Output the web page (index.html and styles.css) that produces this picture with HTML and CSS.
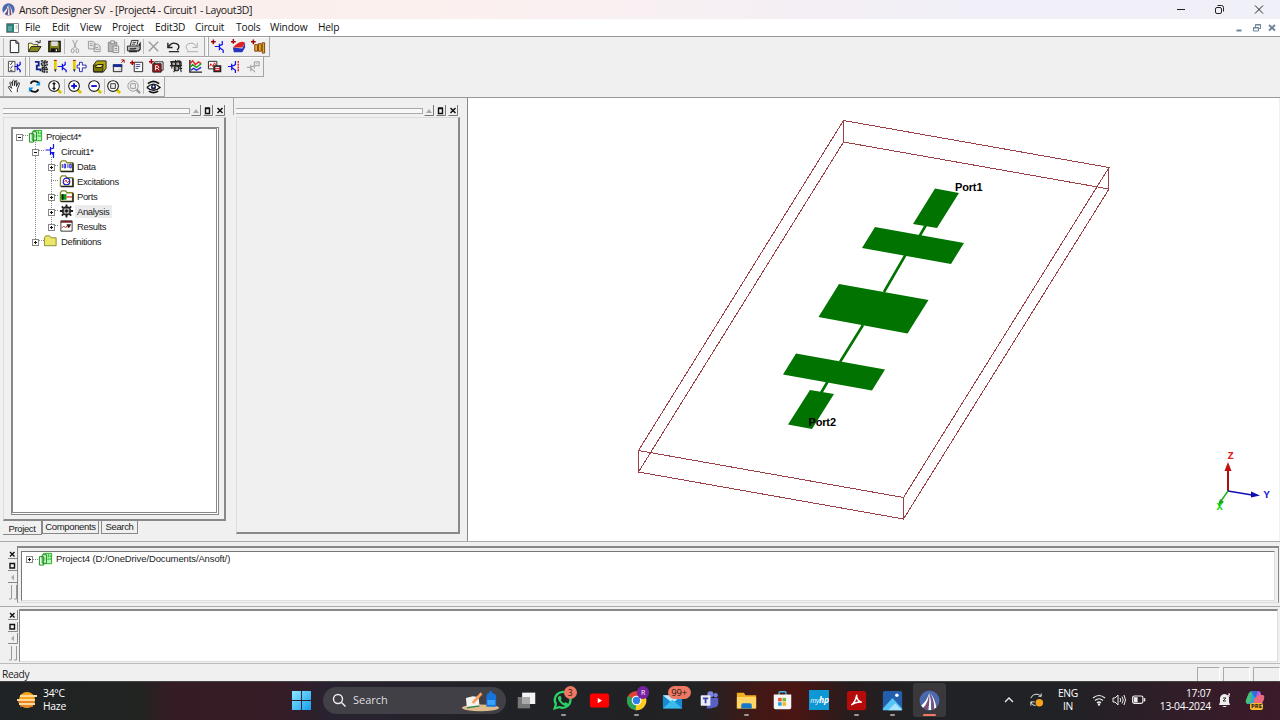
FILE: index.html
```html
<!DOCTYPE html>
<html lang="en">
<head>
<meta charset="utf-8">
<title>Ansoft Designer SV</title>
<link rel="stylesheet" href="styles.css">
</head>
<body>
<svg class="defs" width="0" height="0">
  <defs>
    <symbol id="ansoft" viewBox="0 0 20 20"><circle cx="10" cy="10" r="9.500" fill="#4a68ab"/><path d="M10 2Q8 10 2 15l2 2q5-5 6-15z" fill="#fff"/><path d="M9.500 5Q9 13 5.500 17.500l2 1Q10 13 9.500 5" fill="#b23c45"/><path d="M10 3q0 9-1 16h2.500Q12 10 10 3M11 3q4 8 3.500 15l2-1.500Q15 8 11 3" fill="#fff"/><path d="M10.500 3q3 8 2 16l1.500-1Q14 9 10.500 3" fill="#b23c45"/></symbol>
    <symbol id="project" viewBox="0 0 16 14"><path d="M6 1h8.500v11H6z" fill="#b9f7b9" stroke="#1cb01c"/><path d="M8 2v9M11 2v3M13 3v2M10 7h4" stroke="#18a818"/><path d="M1.500 4.500H6v9H1.500zM4.500 2.500H9v9H4.500z" fill="#eaffea" stroke="#128a12"/><path d="M6 6h2M6 8h2" stroke="#2b2"/></symbol>
    <symbol id="circuit" viewBox="0 0 14 14"><path d="M2 6h5M7 3v8M7 5l3-1V0M7 8l3 2v4" fill="none" stroke="#1010e8" stroke-width="1.200"/><path d="m7 8 4 0-1 4z" fill="#1010e8"/></symbol>
    <symbol id="folder" viewBox="0 0 16 14"><path d="M1.500 12.500V3.500L3 1.500h4l1.500 2h6v9z" fill="#fff" stroke="#85852c" stroke-width="1.400"/><path d="M15 4v9.200H2" fill="none" stroke="#222" stroke-width="1.600"/></symbol>
    <symbol id="gear" viewBox="0 0 16 14"><path d="M8 0v14M1 7h14M3 2l10 10M13 2 3 12" stroke="#222" stroke-width="2"/><circle cx="8" cy="7" r="4" fill="#999" stroke="#222" stroke-width="2"/><path d="M5 5h2M9 5h2M5 9h2M9 9h2" stroke="#ddd"/><circle cx="8" cy="7" r="1.500" fill="#111"/></symbol>
    <symbol id="lens" viewBox="0 0 16 16"><path d="m11 11 4 4" stroke="#d8c800" stroke-width="3"/><circle cx="7.500" cy="7.500" r="5.700" fill="#fff" stroke="#222" stroke-width="1.200"/></symbol>
  </defs>
</svg>
<div class="app">
  <header class="title">
    <svg class="title-logo"><use href="#ansoft"/></svg>
    <span class="title-text">Ansoft Designer SV&nbsp; - [Project4 - Circuit1 - Layout3D]</span>
    <svg class="win-controls" viewBox="0 0 110 19" fill="none" stroke="#222"><path d="M7 9.500h8"/><rect x="45.500" y="7.500" width="6" height="6" rx="1.500"/><path d="M47.500 5.500h4q2 0 2 2v4"/><path d="m85 5.500 8 8m0-8-8 8"/></svg>
  </header>
  <nav class="menu">
    <svg class="doc-icon" viewBox="0 0 13 10"><path d="M.5.5h12v9H.5z" fill="#fff" stroke="#888"/><path d="M1 1h7v8H1z" fill="#2a8078"/><path d="M2 3h4v5H2z" fill="#5aa79e"/><path d="M9.500 3h2M9.500 5h2" stroke="#aaa"/></svg>
    <span class="m1">File</span><span class="m2">Edit</span><span class="m3">View</span><span class="m4">Project</span><span class="m5">Edit3D</span><span class="m6">Circuit</span><span class="m7">Tools</span><span class="m8">Window</span><span class="m9">Help</span>
    <svg class="mdi" viewBox="0 0 46 17" stroke="#71859a" fill="none"><path d="M3.500 11.500h5" stroke-width="2"/><path d="M20.500 8.500h5v3.500h-5zM22.500 8V5.500h5v4H26M20 9h6M22 6h6"/><path d="m36 6 6 5.500M42 6l-6 5.500" stroke-width="2"/></svg>
  </nav>

  <section class="toolbars">
    <div class="bar bar-1">
      <svg class="ic" viewBox="0 0 16 16"><path d="M3.500 1.500h6l3 3v10h-9zM9.500 1.500v3h3" fill="#fff" stroke="#111"/></svg>
      <svg class="ic" viewBox="0 0 16 16"><path d="M1.500 13V4.500h4l1 1.500h5v2" fill="#ffffa0" stroke="#444"/><path d="m1.500 13.500 3-5.500H15l-3.500 5.500z" fill="#86861a" stroke="#222"/><path d="M9 3q3-2 4 1m-2 0h3V1" fill="none" stroke="#222"/></svg>
      <svg class="ic" viewBox="0 0 16 16"><path d="M2 2.500h12v11H2z" fill="#808018" stroke="#111" stroke-width="1.500"/><path d="M4.500 2.500h7v5h-7z" fill="#ddd"/><path d="M4 10h8v4H4z" fill="#111"/><path d="M10 11v2" stroke="#fff" stroke-width="1.500"/></svg>
      <i class="sep"></i>
      <svg class="ic" viewBox="0 0 16 16" fill="none" stroke="#999"><path d="m6 1 4 9M11 1 7 10"/><ellipse cx="6" cy="12.500" rx="1.500" ry="2.200"/><ellipse cx="11" cy="12.500" rx="1.500" ry="2.200"/></svg>
      <svg class="ic" viewBox="0 0 16 16" fill="#e8e8e8" stroke="#999"><path d="M1.500 2.500h5l2 2v6h-7zM7.500 5.500h4l2.500 2v6H7.500zM3 5h3M3 7h3M9 9h3M9 11h4"/></svg>
      <svg class="ic" viewBox="0 0 16 16" fill="#b5b5b5" stroke="#888"><path d="M2.500 3.500h9v10h-9z"/><path d="M5 2h4v3H5z" fill="#eee"/><path d="M7.500 7.500h6v7h-6zM9 10h3M9 12h3" fill="#eee"/></svg>
      <i class="sep"></i>
      <svg class="ic" viewBox="0 0 16 16" stroke="#222" fill="#fff"><path d="M4.500 7 6 1.500h7L11.500 7"/><path d="M1.500 7.500h12v5h-12z" fill="#bbb"/><path d="m13.500 7 1.500-2v6l-2 2M3 13.500h9M4 10.500h6" stroke-width="1.500"/><path d="M7 3.500h4M6 5.500h4M9 10h2"/></svg>
      <i class="sep"></i>
      <svg class="ic" viewBox="0 0 16 16"><path d="m3 3 10 10M13 3 3 13" stroke="#999" stroke-width="1.400"/></svg>
      <svg class="ic" viewBox="0 0 16 16"><path d="M2 4v5h5M3 8q3-5 8-3t1 7" fill="none" stroke="#222" stroke-width="1.500"/><path d="M3 13.500h11" stroke="#222" stroke-width="1.300"/></svg>
      <svg class="ic" viewBox="0 0 16 16"><path d="M13 4v5H8M12 8Q9 3 4 5t-1 7" fill="none" stroke="#aaa"/><path d="M2 13.500h12" stroke="#aaa"/></svg>
      <i class="sep grip gap-a"></i>
      <svg class="ic" viewBox="0 0 16 16"><path d="M0 3h5M2.500.5v5" stroke="#a00000" stroke-width="1.500"/><path d="M4 8h5M9 5v7M9 7l3-1V2M9 9l4 3v3" fill="none" stroke="#1010e8" stroke-width="1.300"/></svg>
      <svg class="ic" viewBox="0 0 16 16"><path d="M5 6q6-5 10-2l-3 5H2z" fill="#de2020"/><path d="m2 9 10 1 3-6v5l-3 5H3z" fill="#2635bb"/><path d="M0 3h5M2.500 0v5" stroke="#a00000" stroke-width="1.500"/></svg>
      <svg class="ic" viewBox="0 0 16 16"><path d="M0 3h5M2.500.5v5" stroke="#a00000" stroke-width="1.500"/><path d="M4 6h3v7H4zM8 5h3v8H8zM12 4h2.500v11H12z" fill="#e6ae13" stroke="#7c3b18"/></svg>
    </div>
    <div class="bar bar-2">
      <svg class="ic" viewBox="0 0 16 16"><path d="M1.500 2.500h7v11h-7z" fill="#fff" stroke="#444"/><path d="m3 5 1 1 2-3M3 9l1 1 2-3M3 12h3" stroke="#333" fill="none"/><path d="M8 8h3M11 5v7M11 8l3-2V3M11 9l3 3v2" stroke="#1010e8" stroke-width="1.300" fill="none"/></svg>
      <i class="sep grip gap-b"></i>
      <svg class="ic" viewBox="0 0 16 16"><path d="M1 3h4v4H3v4h4v2" fill="none" stroke="#102090" stroke-width="2"/><path d="M8 2h6v5H8zM9 9h5v5H9z" fill="#bbb" stroke="#222" stroke-width="1.500" stroke-dasharray="2 1"/><path d="M9 4h5M8 11h7M11 2v12" stroke="#222"/></svg>
      <svg class="ic" viewBox="0 0 16 16"><path d="M2.500 2v9" stroke="#e5cf00" stroke-width="3"/><path d="M1 1.500h3" stroke="#a00"/><path d="m1 11 1.500 3L4 11" fill="#333"/><path d="M5 8h5M10 5v7M10 8l3-2V3M10 9l4 3v2" fill="none" stroke="#1010e8" stroke-width="1.300"/></svg>
      <svg class="ic" viewBox="0 0 16 16"><path d="M2.500 2v9" stroke="#e5cf00" stroke-width="3"/><path d="M1 1.500h3" stroke="#a00"/><path d="m1 11 1.500 3L4 11" fill="#333"/><path d="M5.500 6.500H8v-3h3v3h4v3h-4v4H8v-4H5.500z" fill="#fff" stroke="#2020b8"/></svg>
      <svg class="ic" viewBox="0 0 16 16"><path d="m2 6 3-4h10v8l-3 4H2z" fill="#b6aa10" stroke="#222"/><path d="M1.500 6.500h10v7h-10z" fill="#777500" stroke="#222"/><path d="m4 8 2-2h6l-2 3H4z" fill="#fff17c" stroke="#111"/></svg>
      <svg class="ic" viewBox="0 0 16 16"><path d="M2.500 6.500h9v7h-9z" fill="#ddd" stroke="#222"/><path d="M2 7h10" stroke="#172c8e" stroke-width="3"/><path d="m11 4 3-3m0 3V1h-3" stroke="#a00" fill="none"/><path d="M4 10h5M4 12h4" stroke="#fff"/></svg>
      <svg class="ic" viewBox="0 0 16 16"><path d="M4.500 3.500h9v10h-9z" fill="#fff" stroke="#222"/><path d="M6 6h5M6 8h5M6 10h3" stroke="#4444a0"/><path d="M0 4h5M2.500 1.500v5" stroke="#a00" stroke-width="1.500"/></svg>
      <svg class="ic" viewBox="0 0 16 16"><path d="M6 3h9v9H6z" fill="#fff" stroke="#222"/><path d="M4 5h9v9H4z" fill="#a11818" stroke="#222"/><path d="M7 12V7h2q3 2 0 3H7m2 0 2 2" stroke="#fff" fill="none"/><path d="M0 3h5M2.500 0v5" stroke="#a00" stroke-width="1.500"/></svg>
      <svg class="ic" viewBox="0 0 16 16" fill="#aaa" stroke="#222" stroke-width="1.200"><circle cx="5" cy="5" r="2.500"/><circle cx="10" cy="5" r="3"/><circle cx="8" cy="10" r="2.500"/><path d="M1 3h12M1 7h13M7 1v8M3 2v8M11 2l2 12M7 10l-2 4M11 10h3"/></svg>
      <svg class="ic" viewBox="0 0 16 16" fill="none" stroke-width="1.500"><path d="M2 1v13h13" stroke="#222"/><path d="m2 5 3-3 3 4 3-3 3 2" stroke="#d22"/><path d="m2 9 3-3 4 3 5-4" stroke="#191"/><path d="m3 12 3-2 3 2 5-3" stroke="#22d"/></svg>
      <svg class="ic" viewBox="0 0 16 16"><path d="M1.500 2.500h9v8h-9z" fill="#fff" stroke="#222"/><path d="m3 8 1-3 2 3 2-4 2 3" stroke="#d11" fill="none"/><path d="M7.500 7.500h7v6h-7z" fill="#b22" stroke="#222" stroke-width="1.500"/><path d="M9 9h4M9 11h4" stroke="#fff"/></svg>
      <svg class="ic" viewBox="0 0 16 16"><path d="M1 8h4M5 5v7M5 8l4-2V2M5 9l4 3v3" stroke="#1010e8" stroke-width="1.300" fill="none"/><path d="M12 2v11" stroke="#d11" stroke-width="1.500" stroke-dasharray="2 1"/></svg>
      <svg class="ic" viewBox="0 0 16 16"><path d="M1 9h4M5 6v7M5 9l4-2V3M5 10l4 3v1M9 3h5v4H9v3M11 5h1" stroke="#aaa" stroke-width="1.300" fill="none"/></svg>
    </div>
    <div class="bar bar-3">
      <svg class="ic" viewBox="0 0 16 16"><path d="M5 14 1.500 9q0-2 2-.5L5 10 3 4q1-2 2 0l1 3V2q1-1.500 2 0v5l1-5q2-1 1.500 1L10 8l2-4q2-.5 1 2l-2 5v3" fill="#fff" stroke="#222"/></svg>
      <svg class="ic" viewBox="0 0 16 16"><path d="M4 5q1-4 7-2l2 2M12 11q-1 4-7 2l-2-2" fill="none" stroke="#111" stroke-width="2"/><path d="M14 2v5H9zM2 14V9h5z" fill="#0799e8"/></svg>
      <svg class="ic" viewBox="0 0 16 16"><use href="#lens"/><path d="M7.500 4v7M6 5.500l1.500-1.500L9 5.500M6 9.500 7.500 11 9 9.500" stroke="#111" fill="none" stroke-width="1.300"/></svg>
      <i class="sep"></i>
      <svg class="ic" viewBox="0 0 16 16"><use href="#lens"/><path d="M4.500 7.500h6M7.500 4.500v6" stroke="#1010d8" stroke-width="2"/></svg>
      <svg class="ic" viewBox="0 0 16 16"><use href="#lens"/><path d="M4.500 7.500h6" stroke="#1010d8" stroke-width="2"/></svg>
      <i class="sep"></i>
      <svg class="ic" viewBox="0 0 16 16"><use href="#lens"/><path d="M5 5h5v5H5z" fill="#eee" stroke="#333"/></svg>
      <svg class="ic" viewBox="0 0 16 16" fill="#eee" stroke="#999"><path d="m11 11 4 4" stroke-width="2.500"/><circle cx="7.500" cy="7.500" r="5.500"/><path d="M5 5h5v5H5z"/></svg>
      <i class="sep"></i>
      <svg class="ic" viewBox="0 0 16 16"><path d="M1 9q7-7 14 0-7 6-14 0" fill="#fff" stroke="#111" stroke-width="1.500"/><path d="M2 5q6-5 12 0M3 13q5 3 10 0" fill="none" stroke="#111" stroke-width="1.700"/><circle cx="8" cy="8.500" r="2.700" fill="#182050"/><circle cx="8" cy="8" r="1" fill="#fff"/></svg>
    </div>
  </section>

  <main class="work">
    <aside class="dock dock-left">
      <div class="caption"><i class="rails"></i><svg class="cap-buttons" viewBox="0 0 34 11"><use href="#capset"/></svg></div>
      <div class="panel panel-left">
        <div class="tree">
          <svg class="tree-lines" width="80" height="130" viewBox="13 129 80 130" fill="none" stroke="#888" stroke-dasharray="1 1"><path d="M35.500 143v98M51.500 158v68M23 136.500h5M39 151.500h6M51 166.500h8M51 181.500h8M51 196.500h8M51 211.500h8M51 226.500h8M35 241.500h9"/></svg>
          <div class="row lv0"><b class="box minus"></b><svg class="ti"><use href="#project"/></svg><span>Project4*</span></div>
          <div class="row lv1"><b class="box minus"></b><svg class="ti"><use href="#circuit"/></svg><span>Circuit1*</span></div>
          <div class="row lv2"><b class="box plus"></b><svg class="ti" viewBox="0 0 16 14"><use href="#folder"/><path d="M3.500 5v4M5.500 5h1.500v4H5.500zM9.500 5v4M11.500 5H13v4h-1.500z" stroke="#1818c8" fill="none"/></svg><span>Data</span></div>
          <div class="row lv2"><b class="box none"></b><svg class="ti" viewBox="0 0 16 14"><use href="#folder"/><circle cx="8" cy="7.500" r="3.500" fill="#fff" stroke="#1818c8" stroke-width="1.300"/><path d="m6 8 1.500-2L9 9l1.500-2" stroke="#d22" fill="none"/></svg><span>Excitations</span></div>
          <div class="row lv2"><b class="box plus"></b><svg class="ti" viewBox="0 0 16 14"><use href="#folder"/><path d="M2 5h6v6H2z" fill="#159c15"/><path d="M4 5v6" stroke="#111" stroke-width="1.500"/><path d="M8 8h6" stroke="#d22" stroke-width="1.300"/></svg><span>Ports</span></div>
          <div class="row lv2"><b class="box plus"></b><svg class="ti"><use href="#gear"/></svg><span class="selected">Analysis</span></div>
          <div class="row lv2"><b class="box plus"></b><svg class="ti" viewBox="0 0 16 14"><path d="M2 1.500h12v11H2z" fill="#fff" stroke="#333"/><path d="M2 2.500h12" stroke="#742020" stroke-width="2"/><path d="m3 9 2-2 2 2 2-3 1 3 2-2" stroke="#c22" fill="none"/><path d="M8 5h5l-2.500 4z" fill="#222"/></svg><span>Results</span></div>
          <div class="row lv1 defs-row"><b class="box plus"></b><svg class="ti" viewBox="0 0 16 14"><path d="M1.500 12V3.500L3 1.500h4l1.500 2h5.500V12z" fill="#ece66b" stroke="#8a872f"/></svg><span>Definitions</span></div>
        </div>
      </div>
      <div class="tabs"><span class="tab active">Project</span><span class="tab components">Components</span><span class="tab search-tab">Search</span></div>
    </aside>
    <aside class="dock dock-mid">
      <div class="caption"><i class="rails"></i><svg class="cap-buttons" viewBox="0 0 34 11"><use href="#capset"/></svg></div>
      <div class="panel panel-mid"></div>
    </aside>
    <section class="viewport">
      <svg width="811" height="443" viewBox="468 98 811 443">
        <g fill="none" stroke="#9c4048" shape-rendering="crispEdges"><path d="M843.500 120.500 1109 167.500 903.500 497.500 638.500 450.500z"/><path d="M843.500 142 1109 189 903.500 519 638.500 472z"/><path d="M843.500 120v22M1108.500 167v22M903.500 497v22M638.500 450v22"/></g>
        <g fill="#007300"><path d="m935 188.500 24 4.500-22 35-24-4zM875 227l89 16-13 21-89-16zM839 284l89.500 16-21 33.500L818.500 317zM796 353.500l89 16-13 21-89-16zM810 390l24 4-22 35-24-4.500z"/><path d="m926 225-7 12M906 254l-22 38M863 325l-23 37M828 381l-7 12" stroke="#007300" stroke-width="2.600"/></g>
        <text class="port" x="955" y="190.700" textLength="27.500">Port1</text><text class="port" x="808.500" y="426" textLength="27.500">Port2</text>
        <g stroke-width="1.500"><path d="M1228 491v-22" stroke="#aa1010" stroke-width="2"/><path d="m1224.500 471 3.500-9 3.500 9z" fill="#c01010"/><path d="m1228 491 24 4" stroke="#1010b0"/><path d="m1251 491.500 9 4-9 2z" fill="#1010b0"/><path d="m1228 491-7 10" stroke="#20b020"/><path d="m1218 506 2-7 4 3z" fill="#15a515"/></g>
        <text class="axis" x="1227.500" y="459" fill="#e02020">Z</text><text class="axis" x="1263.500" y="498" fill="#2020d0">Y</text><text class="axis" x="1216.500" y="510" fill="#10d810">X</text>
      </svg>
    </section>
  </main>

  <section class="message">
    <svg class="side-buttons" viewBox="0 0 12 54"><use href="#sideset"/></svg>
    <div class="message-frame"><div class="message-box"><b class="box plus"></b><i class="dash"></i><svg class="ti"><use href="#project"/></svg><span>Project4 (D:/OneDrive/Documents/Ansoft/)</span></div></div>
  </section>
  <section class="progress">
    <svg class="side-buttons" viewBox="0 0 12 54"><use href="#sideset"/></svg>
    <div class="progress-box"></div>
  </section>
  <footer class="status"><span>Ready</span><i class="cell c1"></i><i class="cell c2"></i><i class="cell c3"></i></footer>

  <div class="taskbar">
    <div class="weather">
      <svg width="22" height="20" viewBox="0 0 22 20"><circle cx="11" cy="10" r="8" fill="#f5a51c"/><path d="M4 6h17M1 10h18M3 14h16" stroke="#ffd89b" stroke-width="1.800"/><path d="M2 12h16M4 16h13" stroke="#e97b2c" stroke-width="1.500"/></svg>
      <div>34°C<br>Haze</div>
    </div>
    <svg class="start" viewBox="0 0 20 20"><defs><linearGradient id="win" x2="1" y2="1"><stop stop-color="#8ce8ff"/><stop offset="1" stop-color="#149df0"/></linearGradient></defs><path d="M0 0h9.500v9.500H0zM10.500 0H20v9.500h-9.500zM0 10.500h9.500V20H0zM10.500 10.500H20V20h-9.500z" fill="url(#win)"/></svg>
    <div class="search"><svg width="15" height="15" viewBox="0 0 15 15" fill="none" stroke="#eee" stroke-width="1.400"><circle cx="6" cy="6" r="4.500"/><path d="m9.500 9.500 4 4"/></svg><span>Search</span>
      <svg class="search-art" viewBox="0 0 40 22"><ellipse cx="19" cy="18" rx="19" ry="3.500" fill="#dfbc8b"/><path d="m4 8 7-2 6 1 1 9-6 1-7 1z" fill="#f3f3ec"/><path d="m5 18 13-2" stroke="#318250" stroke-width="1.500"/><path d="m10 12 9-10 2 2-9 10z" fill="#f5a162"/><path d="M25 17V7q0-4 3-4V1h3v2q4 0 4 4v10z" fill="#1675dc"/><path d="M26 10h8v5h-8z" fill="#3aa1f6"/></svg></div>
    <div class="apps">
      <div class="task"><svg viewBox="0 0 24 24"><path d="M2 8h14v13H2z" fill="#777"/><path d="M7 3h15v13H7z" fill="#f3f3f3"/><path d="M7 8h9v8H7z" fill="#aaa"/></svg></div>
      <div class="task run"><svg viewBox="0 0 24 24"><path d="m3 21 1.500-5a9 9 0 1 1 4 3.500z" fill="#202124" stroke="#2bd366" stroke-width="2.500"/><path d="M8 7q1-1 2 0l1 3-1 1q1 3 4 4l1-1 3 1q1 1-1 3-4 1-8-4T8 7" fill="#2bd366"/></svg><em class="badge b3">3</em></div>
      <div class="task"><svg viewBox="0 0 24 24"><rect x="1" y="4" width="22" height="16" rx="3" fill="#f00"/><path d="m10 9 5 3-5 3z" fill="#fff"/></svg></div>
      <div class="task run"><svg viewBox="0 0 24 24"><circle cx="12" cy="12" r="11" fill="#e04335"/><path d="M12 12 2.500 6.500A11 11 0 0 0 11 23z" fill="#28a454"/><path d="m12 12 10.500-4A11 11 0 0 1 11 23z" fill="#ffcd22"/><circle cx="12" cy="12" r="5.500" fill="#fff"/><circle cx="12" cy="12" r="4.200" fill="#327fe8"/></svg><em class="badge br">R</em></div>
      <div class="task"><svg viewBox="0 0 24 24"><path d="M1 6h22v15H1z" fill="#168bd1"/><path d="m1 6 11 9L23 6z" fill="#bfeaff"/><path d="m1 21 11-10 11 10z" fill="#3bbbed"/></svg><em class="badge b99">99+</em></div>
      <div class="task"><svg viewBox="0 0 24 24"><circle cx="19" cy="6" r="2.500" fill="#7380e4"/><circle cx="13" cy="5" r="3.500" fill="#7d86e2"/><path d="M8 9h14v7q-1 4-5 4l-4 1H9z" fill="#5960c4"/><rect x="2" y="6" width="11" height="12" rx="1" fill="#e9eafb"/><path d="M4.500 9.500h6M7.500 9.500V15" stroke="#3a43a5" stroke-width="2"/></svg></div>
      <div class="task run"><svg viewBox="0 0 24 24"><path d="M1 3h8l2 3h12v15H1z" fill="#f3af22"/><path d="M1 8h22v13H1z" fill="#ffd665"/><path d="M6 21v-4q0-2 2-2h8q2 0 2 2v4z" fill="#1679c9"/></svg></div>
      <div class="task"><svg viewBox="0 0 24 24"><path d="M8 6V3q0-1 1-1h6q1 0 1 1v3" fill="none" stroke="#45b8e8" stroke-width="1.500"/><path d="M2 5h20v15q0 2-2 2H4q-2 0-2-2z" fill="#f5f5f5"/><path d="M7 9h4v4H7z" fill="#ef5130"/><path d="M12 9h4v4h-4z" fill="#79b928"/><path d="M7 14h4v4H7z" fill="#22a1e0"/><path d="M12 14h4v4h-4z" fill="#f7b717"/></svg></div>
      <div class="task"><div class="hp">my<b>hp</b></div></div>
      <div class="task run"><svg viewBox="0 0 24 24"><rect x="1" y="1" width="22" height="22" rx="3" fill="#b50b0b"/><path d="M6 17q4-2 6-10 .5-2 0 0 1 6 6 7-6-1-12 3" fill="none" stroke="#fff" stroke-width="1.800"/></svg></div>
      <div class="task run"><svg viewBox="0 0 24 24"><rect x="1" y="1" width="22" height="22" rx="2" fill="#235fac"/><path d="m1 21 11-12 11 12v2H1z" fill="#54c5f4"/><path d="m7 23 8-8 8 8z" fill="#a9e4fc"/><circle cx="17" cy="6" r="2" fill="#fff"/></svg></div>
      <div class="task run current"><svg viewBox="0 0 20 20"><use href="#ansoft"/></svg></div>
    </div>
    <div class="tray">
      <svg class="t-chev" viewBox="0 0 10 8"><path d="m1 6 4-4 4 4" fill="none" stroke="#eee" stroke-width="1.300"/></svg>
      <svg class="t-sync" viewBox="0 0 16 16"><path d="M2 6q2-5 8-4l3 2V1m0 3h-3M2 10q1 4 5 4M2 14v-4h4" fill="none" stroke="#eee"/><circle cx="11" cy="11" r="4" fill="#f6a41c"/></svg>
      <div class="lang">ENG<br>IN</div>
      <svg class="t-wifi" viewBox="0 0 14 12" fill="none" stroke="#eee" stroke-width="1.200"><path d="M1 4q6-5 12 0M3 6.500q4-3.500 8 0M5 9q2-2 4 0"/><circle cx="7" cy="10.500" r=".6" fill="#eee"/></svg>
      <svg class="t-vol" viewBox="0 0 14 12" fill="none" stroke="#eee"><path d="M1 4h2l3-3v10L3 8H1zM8 4q1.500 2 0 4M10 2.500q2.500 3.500 0 7M12 1q3 5 0 10"/></svg>
      <svg class="t-bat" viewBox="0 0 15 10"><rect x=".7" y=".7" width="11" height="8" rx="2" fill="none" stroke="#eee" stroke-width="1.300"/><path d="M2 2h4v5.500H2z" fill="#eee"/><path d="M13.500 3v3.500" stroke="#eee" stroke-width="1.500"/></svg>
      <div class="clock">17:07<br>13-04-2024</div>
      <svg class="t-bell" viewBox="0 0 13 15"><path d="M1 12 2 9V5q1-4 5-4 4 1 4 4v4l1 3zM4 13h5q-2 2-5 0" fill="#eee"/><path d="M5 5h3L5 8h3" fill="none" stroke="#333"/><path d="M10 1h2l-2 2h2" stroke="#eee" fill="none"/></svg>
      <div class="copilot"><svg viewBox="0 0 20 19"><path d="M6 1h7l-4 13H4q-4 0-3-4L4 3z" fill="#27a7e2"/><path d="M1 10 4 3l3-2-1 10-3 3q-3-1-2-4" fill="#4abf70"/><path d="M13 1q3 0 3 4h2q2 1 1 4l-3 7q-1 2-4 2H7z" fill="#c15ae0"/><path d="m9 9 5-4h4q2 2 0 6l-3 6-7 1z" fill="#ec6a7c"/><path d="M6 1h7l-3 7z" fill="#3968dc"/></svg><em>PRE</em></div>
    </div>
  </div>
</div>
<svg class="defs" width="0" height="0">
  <defs>
    <g id="capset"><path d="M.5 10.500h9V0M12.500 10.500h9V0M24.500 10.500h9V0" fill="none" stroke="#777"/><path d="m2 8 3-4 3 4z" fill="#aaa"/><path d="M14.500 3.500h4v5h-4zM14 3h5" fill="none" stroke="#111" stroke-width="1.400"/><path d="m26.500 3 5 5M31.500 3l-5 5" stroke="#111" stroke-width="1.500"/></g>
    <g id="sideset"><path d="M1 9.500h9.500V0M1 21.500h9.500V12M1 33.500h9.500V23" fill="none" stroke="#888"/><path d="m3 3 4.500 4.500M7.500 3 3 7.500" stroke="#111" stroke-width="1.400"/><path d="M3 14.500h4.500V19H3z" fill="none" stroke="#111" stroke-width="1.400"/><path d="m7 25.500-3 3 3 3z" fill="#aaa"/><path d="M4.500 36v14H2M9.500 36v14H7" fill="none" stroke="#999"/></g>
  </defs>
</svg>
</body>
</html>
```
FILE: styles.css
```css
* { box-sizing: border-box; }
body { margin: 0; background: #f0f0f0; font-family: "Liberation Sans", Arial, sans-serif; overflow: hidden; }
.defs { position: absolute; }
svg { flex: none; display: block; }
.app { width: 1280px; height: 720px; display: flex; flex-direction: column; }
.title { height: 19px; display: flex; align-items: center; background: linear-gradient(90deg, #f9eeeb, #fcf0ef 35%, #f1eff7 75%, #f0f0f8); font-family: "Open Sans", "Noto Sans", sans-serif; }
.title-logo { width: 13px; height: 13px; margin: 0 4px 0 2px; }
.title-text { font-size: 10.5px; letter-spacing: -.37px; color: #1a1a1a; white-space: nowrap; }
.win-controls { width: 110px; height: 19px; margin-left: auto; }
.menu { height: 18px; display: flex; align-items: center; background: #fff; border-bottom: 1px solid #999; font: 10.2px/17px "Open Sans", "Noto Sans", sans-serif; letter-spacing: -.18px; color: #111; white-space: nowrap; }
.doc-icon { width: 13px; height: 10px; margin: 0 6px; }
.m1 { width: 27px; } .m2 { width: 28px; } .m3 { width: 32px; } .m4 { width: 43px; } .m5 { width: 40px; } .m6 { width: 41px; } .m7 { width: 34px; } .m8 { width: 48px; }
.mdi { width: 46px; height: 17px; margin: 0 1px 0 auto; }

.toolbars { height: 60px; }
.bar { height: 20px; display: flex; align-items: center; padding-left: 5px; border: 1px solid #a5a5a5; border-width: 0 1px 1px 0; box-shadow: inset 0 1px #fff, inset 3px 0 #f0f0f0, inset 4px 0 #bbb; }
.bar-1 { width: 270px; } .bar-2 { width: 264px; } .bar-3 { width: 165px; }
.ic { width: 15px; height: 15px; margin: 0 2.400px; }
.bar-2 .ic { margin: 0 2.150px; }
.sep { width: 1px; height: 15px; margin-right: -1px; background: #bbb; }
.grip { height: 19px; background: #aaa; margin: 0 0 0 1px; box-shadow: 3px 0 #fff, 4px 0 #aaa; }
.gap-a { margin-right: 4px; } .gap-b { margin-right: 5.500px; }

.work { height: 445px; display: flex; border-top: 1px solid #999; border-bottom: 1px solid #aaa; }
.dock { padding-top: 6px; }
.dock-left { width: 233px; padding-left: 3px; }
.dock-mid { width: 234px; padding-left: 3px; background: linear-gradient(#aaa, #aaa) 0 0 / 1px 17px no-repeat; }
.caption { width: 222px; height: 13px; display: flex; align-items: center; }
.rails { flex: 1; height: 6px; border-top: 1px solid #aaa; border-bottom: 1px solid #aaa; border-right: 1px solid #aaa; background: #f8f8f8; margin-right: 1px; }
.cap-buttons { width: 34px; height: 11px; }
.panel { border: 1px solid #ddd; border-right: 2px solid #888; border-bottom: 2px solid #888; }
.panel-left { width: 223px; height: 404px; padding: 9px 5px 4px 7px; }
.panel-mid { width: 224px; height: 417px; }
.tree { position: relative; height: 388px; border: 2px solid #888; border-right: 3px double #888; border-bottom: 3px double #888; background: #fff; font-size: 9.5px; color: #222; }
.tree-lines { position: absolute; left: 0; top: -1px; }
.row { height: 15px; display: flex; align-items: center; position: relative; top: -.5px; letter-spacing: -.38px; white-space: nowrap; }
.ti { width: 15px; height: 14px; }
.row span { padding-left: 3px; line-height: 13px; }
.row .selected { background: #ececec; padding-right: 3px; }
.row .selected { margin-left: 1px; padding-left: 2px; }
.lv0 { padding-left: 3px; } .lv1 { padding-left: 19px; } .lv2 { padding-left: 35px; }
.lv0 .ti { margin-left: 5px; } .lv1 .ti, .lv2 .ti { margin-left: 4px; }
.box { position: relative; flex: none; width: 7px; height: 7px; border: 1px solid #888; background: linear-gradient(#111, #111) center / 3px 1px no-repeat #fff; }
.plus { background: linear-gradient(#111, #111) center / 3px 1px no-repeat, linear-gradient(#111, #111) center / 1px 3px no-repeat, #fff; }
.row .box { top: 1px; }
.none { visibility: hidden; }
.tabs { display: flex; align-items: flex-start; height: 14px; font-size: 9.5px; line-height: 12px; letter-spacing: -.35px; color: #222; }
.tab { height: 13px; border: 1px solid #888; border-top: 0; text-align: center; }
.active { width: 39px; border-left: 0; height: 14px; line-height: 15px; }
.components { width: 57px; } .search-tab { width: 37px; margin-left: 2px; }
.viewport { width: 812px; border-left: 1px solid #888; background: #fff; }
.port { font: bold 11px "Liberation Sans", Arial, sans-serif; fill: #000; }
.axis { font: bold 10.5px "Liberation Mono", monospace; }

.message { height: 65px; padding-top: 4px; display: flex; border-bottom: 1px solid #aaa; padding-right: 1px; }
.side-buttons { width: 12px; height: 54px; margin: 3px 0 0 7px; }
.message-frame { flex: 1; height: 57px; margin-left: -2px; border: 1px solid #888; border-top-width: 2px; border-bottom: 1px solid #ddd; padding: 3px; }
.message-box { height: 50px; display: flex; align-items: flex-start; border: 1px solid #777; border-right-color: #ddd; border-bottom-color: #ddd; background: #fff; padding: 0 0 0 4px; font-size: 9.5px; line-height: 13px; letter-spacing: -.12px; color: #222; white-space: nowrap; }
.message-box .box { margin-top: 4px; }
.message-box .ti { margin: 0 3px 0 0; }
.dash { width: 5px; height: 1px; margin-top: 7px; border-top: 1px dotted #888; }
.progress { height: 56px; display: flex; padding: 2px 2px 0 0; }
.progress .side-buttons { margin-top: 1px; }
.progress-box { flex: 1; height: 53px; background: #fff; border: 1px solid #888; border-top-width: 2px; border-right-color: #ddd; border-bottom-color: #ddd; }
.status { height: 18px; display: flex; border-top: 1px solid #bbb; font: 10.2px/20px "Open Sans", "Noto Sans", sans-serif; letter-spacing: -.35px; color: #222; }
.status span { width: 1195px; margin-left: 2px; }
.cell { height: 14px; margin: 3px 3px 0 0; border-left: 1px solid #aaa; border-top: 1px solid #aaa; border-right: 1px solid #fff; }
.c1 { width: 23px; } .c2 { width: 27px; } .c3 { width: 27px; margin-right: 0; }

.taskbar { height: 39px; display: flex; align-items: center; padding-bottom: 2px; border-top: 1px solid #444; color: #fff; background: linear-gradient(90deg, #202325 0, #222422 140px, #351c24 170px, #351c26 280px, #292230 330px, #202225 530px, #222124 700px, #431815 760px, #4a1512 795px, #281c1d 850px, #202225 920px, #202225 1060px, #351c29 1210px, #3b1a29 1280px); font: 10.3px/13.5px "Open Sans", "Noto Sans", sans-serif; letter-spacing: -.25px; }
.weather { width: 276px; padding-left: 16px; display: flex; align-items: center; gap: 5px; }
.start { width: 19px; height: 19px; margin-left: 16px; }
.search { width: 183px; height: 27px; margin-left: 12px; border-radius: 14px; background: #414047; display: flex; align-items: center; padding-left: 9px; font-size: 11px; letter-spacing: 0; }
.search span { margin-left: 6px; color: #ddd; }
.search-art { width: 39px; height: 22px; margin: 2px 5px 0 auto; }
.apps { display: flex; margin-left: 2px; height: 36px; }
.task { width: 36.650px; height: 36px; display: flex; align-items: center; justify-content: center; position: relative; }
.task > svg { width: 21px; height: 21px; }
.run::after { content: ""; position: absolute; left: 16px; bottom: 2px; width: 5px; height: 2px; border-radius: 1px; background: #999; }
.current::before { content: ""; position: absolute; left: 2px; top: 1px; width: 33px; height: 34px; background: #3a383b; border-radius: 3px; }
.current > svg { position: relative; }
.current::after { left: 12px; width: 13px; background: #ef7b65; }
.badge { position: absolute; height: 13px; border-radius: 7px; background: #ee7864; color: #251815; font-style: normal; font-size: 8.500px; line-height: 13px; text-align: center; }
.b3 { width: 13px; left: 19px; top: 4px; }
.br { width: 12px; left: 19px; top: 4px; background: #7622a0; color: #fff; font-size: 7px; }
.b99 { width: 23px; left: 13px; top: 4px; font-size: 9.5px; }
.hp { width: 20px; height: 20px; background: #0d97d5; font-size: 7px; line-height: 19px; font-style: italic; text-align: center; }
.hp b { font-size: 8.5px; }
.tray { display: flex; align-items: center; margin-left: auto; }
.t-chev { width: 10px; height: 8px; margin-right: 15px; }
.t-sync { width: 15px; height: 16px; margin-right: 13px; }
.lang { width: 22px; text-align: center; }
.t-wifi { width: 14px; height: 12px; margin: 0 6px 0 13px; }
.t-vol { width: 14px; height: 12px; margin-right: 6px; }
.t-bat { width: 14px; height: 10px; }
.clock { width: 65px; text-align: right; }
.t-bell { width: 13px; height: 15px; margin: 0 14px 0 7px; }
.copilot { width: 35px; height: 20px; position: relative; }
.copilot svg { width: 20px; height: 19px; }
.copilot em { position: absolute; left: 5px; top: 13px; padding: 0 1px; background: #f6b930; color: #211; border-radius: 2px; font: bold 6px/7px "Open Sans", sans-serif; letter-spacing: 0; }
```
